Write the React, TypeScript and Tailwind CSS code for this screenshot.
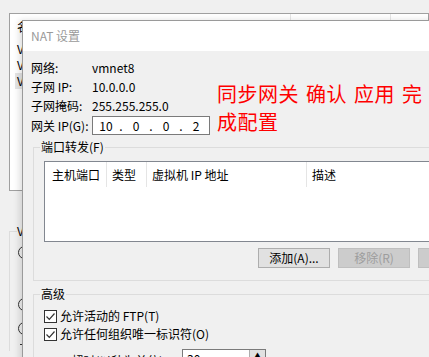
const font = "font-['Noto_Sans_CJK_SC','Noto_Sans',sans-serif]";

function Checkbox({ label }: { label: string }) {
  return (
    <div className="flex items-center h-[18px] gap-[3px]">
      <span className="w-[13px] h-[13px] border border-[#333333] bg-white flex items-center justify-center">
        <svg width="11" height="11" viewBox="0 0 11 11" fill="none">
          <path d="M1.5 5.5l2.8 2.8L9.5 2.5" stroke="#333333" strokeWidth="1.2" />
        </svg>
      </span>
      <span>{label}</span>
    </div>
  );
}

function GroupBox({ title, className = "", children }: { title: string; className?: string; children?: React.ReactNode }) {
  return (
    <div className={`relative border border-[#dcdcdc] ${className}`}>
      <span className="absolute top-[-9px] left-[6px] px-[1px] bg-[#f0f0f0] leading-[16px]">{title}</span>
      {children}
    </div>
  );
}

// background window peeking out behind the dialog
function BackWindow() {
  return (
    <div className="pt-[13px] pl-[9px]">
      <div className="h-[178px] border border-[#a0a0a0] bg-white">
        <div className="relative h-[25px] pl-[7px] flex items-center">
          <span>名称</span>
          <span className="absolute left-[280px] top-0 h-full border-l border-[#e5e5e5]" />
          <span className="absolute left-[380px] top-0 h-full border-l border-[#e5e5e5]" />
        </div>
        <div className="mt-[2px] flex flex-col">
          <div className="h-[16px] pl-[7px] flex items-center">V</div>
          <div className="h-[16px] pl-[7px] flex items-center">V</div>
          <div className="h-[16px] ml-[5px] pl-[2px] flex items-center bg-[#e5e5e5]">V</div>
        </div>
      </div>
      <div className="relative mt-[40px] h-[120px] border-l border-t border-[#dcdcdc]">
        <span className="absolute top-[-9px] left-[7px] bg-[#f0f0f0] leading-[16px]">V</span>
        <div className="pl-[8px] pt-[14px] flex flex-col">
          <span className="w-[13px] h-[13px] rounded-full border border-[#333333]" />
          <span className="mt-[39px] w-[13px] h-[13px] rounded-full border border-[#333333]" />
          <span className="mt-[11px] w-[13px] h-[13px] rounded-full border border-[#333333]" />
          <span className="mt-[9px] ml-[2px] w-[11px] border-t border-[#333333]" />
        </div>
      </div>
    </div>
  );
}

function IpField() {
  const parts = ["10", "0", "0", "2"];
  return (
    <div className="w-[118px] h-[19px] border border-[#7a7a7a] bg-white flex items-center">
      {parts.map((p, i) => (
        <div key={i} className="flex items-center">
          {i > 0 && <span className="w-[4px] text-center">.</span>}
          <span className="w-[26px] text-center">{p}</span>
        </div>
      ))}
    </div>
  );
}

export default function App() {
  return (
    <div className={`relative w-[429px] h-[357px] overflow-hidden bg-[#f0f0f0] text-[12px] text-black ${font}`}>
      <BackWindow />

      {/* NAT 设置 dialog */}
      <div className="absolute left-[22px] top-[20px] w-[470px] h-[360px] bg-[#f0f0f0] border border-[#9a9a9a] shadow-[-3px_0_6px_rgba(0,0,0,0.12)]">
        <div className="h-[30px] bg-white pl-[8px] flex items-center text-[#9a9a9a]">NAT 设置</div>

        <div className="pl-[8px] pt-[7px]">
          <div className="grid grid-cols-[61px_1fr] auto-rows-[19px] items-center">
            <span>网络:</span>
            <span>vmnet8</span>
            <span>子网 IP:</span>
            <span>10.0.0.0</span>
            <span>子网掩码:</span>
            <span>255.255.255.0</span>
          </div>
          <div className="grid grid-cols-[61px_1fr] h-[21px] items-center">
            <span>网关 IP(G):</span>
            <IpField />
          </div>

          <GroupBox title="端口转发(F)" className="mt-[11px] ml-[2px] h-[134px]">
            <div className="pl-[10px] pt-[13px]">
              <div className="h-[81px] border border-[#828790] bg-white">
                <div className="h-[25px] flex items-stretch">
                  <div className="w-[61px] pl-[7px] flex items-center">主机端口</div>
                  <div className="w-[40px] pl-[5px] flex items-center border-l border-[#e5e5e5]">类型</div>
                  <div className="w-[160px] pl-[5px] flex items-center border-l border-[#e5e5e5]">虚拟机 IP 地址</div>
                  <div className="w-[120px] pl-[5px] flex items-center border-l border-[#e5e5e5]">描述</div>
                </div>
              </div>
              <div className="mt-[6px] ml-[214px] flex gap-[8px]">
                <button className="w-[74px] h-[20px] border border-[#adadad] bg-[#e1e1e1] leading-none">添加(A)...</button>
                <button className="w-[74px] h-[20px] border border-[#bfbfbf] bg-[#cccccc] text-[#9d9d9d] leading-none">移除(R)</button>
                <button className="w-[74px] h-[20px] border border-[#bfbfbf] bg-[#cccccc] text-[#9d9d9d] leading-none">属性(P)</button>
              </div>
            </div>
          </GroupBox>

          <GroupBox title="高级" className="mt-[13px] ml-[2px] h-[90px]">
            <div className="pl-[10px] pt-[12px] flex flex-col">
              <Checkbox label="允许活动的 FTP(T)" />
              <Checkbox label="允许任何组织唯一标识符(O)" />
              <div className="mt-[6px] flex items-start h-[20px]">
                <span className="w-[138px] pt-[4px] leading-[16px]">UDP 超时(以秒为单位)(U):</span>
                <div className="w-[84px] h-[20px] border border-[#7a7a7a] bg-white flex">
                  <span className="flex-1 pl-[4px] leading-[18px]">30</span>
                  <span className="w-[16px] border-l border-[#adadad] bg-[#e1e1e1] text-[8px] text-center">▲</span>
                </div>
              </div>
            </div>
          </GroupBox>
        </div>
      </div>

      {/* red annotation */}
      <div className="absolute left-[217px] top-[80px] text-[20px] leading-[28px] tracking-[0.5px] [word-spacing:2px] text-[#ff0000] whitespace-nowrap">
        <div>同步网关 确认 应用 完</div>
        <div>成配置</div>
      </div>
    </div>
  );
}
